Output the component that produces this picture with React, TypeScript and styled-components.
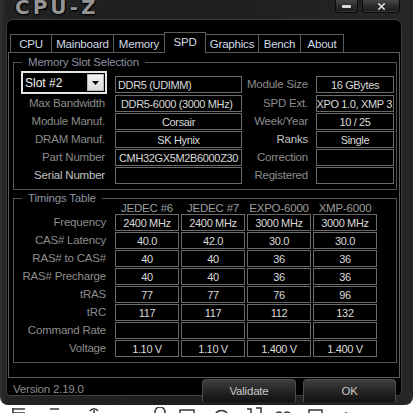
import React from "react";
import styled, { createGlobalStyle } from "styled-components";
import { X } from "lucide-react";

const GlobalStyle = createGlobalStyle`
  html, body {
    margin: 0;
    padding: 0;
    background: #ffffff;
  }
  body {
    font-family: "Liberation Sans", Arial, sans-serif;
    font-size: 11px;
  }
`;

const Screen = styled.div`
  width: 413px;
  height: 413px;
  overflow: hidden;
  background: #ffffff;
  display: flex;
  flex-direction: column;
`;

const Frame = styled.div`
  height: 405px;
  flex: 0 0 auto;
  box-sizing: border-box;
  padding: 0 11px 11px 6px;
  background: linear-gradient(90deg, #303030 0px, #222222 6px, #1e1e1e 50%, #262626 100%);
  border-radius: 0 0 8px 8px;
  display: flex;
  flex-direction: column;
`;

const TitleBar = styled.div`
  height: 19px;
  flex: 0 0 auto;
  display: flex;
  align-items: flex-start;
  justify-content: space-between;
`;

const Logo = styled.div`
  margin: -3px 0 0 9px;
  font-family: "DejaVu Sans", sans-serif;
  font-weight: bold;
  font-size: 20px;
  line-height: 20px;
  letter-spacing: 3px;
  color: #959595;
  text-shadow: 1px 1px 0 #000, -1px 0 0 #000, 0 1px 2px #000;
`;

const WinButtons = styled.div`
  display: flex;
  gap: 4px;
  margin-right: 2px;
`;

const WinButton = styled.div<{ $w: number }>`
  width: ${(p) => p.$w}px;
  height: 13px;
  box-sizing: border-box;
  border: 1px solid #0b0b0b;
  border-top: none;
  border-radius: 0 0 4px 4px;
  background: linear-gradient(180deg, #474747 0%, #2c2c2c 50%, #1a1a1a 100%);
  box-shadow: inset 0 -1px 0 rgba(255, 255, 255, 0.12);
  display: flex;
  align-items: center;
  justify-content: center;
  color: #dedede;
`;

const MinBar = styled.div`
  width: 9px;
  height: 3px;
  background: #d8d8d8;
  border-radius: 1px;
`;

const Panel = styled.div`
  flex: 1;
  background: #000;
  border: 1px solid #3e3e3e;
  border-radius: 7px 7px 4px 4px;
  padding: 12px 1px 0 1px;
  display: flex;
  flex-direction: column;
`;

const TabRow = styled.div`
  height: 20px;
  display: flex;
  align-items: flex-end;
  padding-left: 2px;
  position: relative;
  z-index: 1;
`;

const Tab = styled.div<{ $w: number; $active?: boolean }>`
  width: ${(p) => p.$w}px;
  height: ${(p) => (p.$active ? 21 : 18)}px;
  margin-bottom: ${(p) => (p.$active ? -1 : 0)}px;
  box-sizing: border-box;
  border: 1px solid #5c5c5c;
  border-bottom: none;
  background: #000;
  color: #d2dce6;
  font-size: 11.5px;
  letter-spacing: -0.2px;
  display: flex;
  align-items: center;
  justify-content: center;
  padding-bottom: ${(p) => (p.$active ? 3 : 0)}px;
  & + & {
    margin-left: -1px;
  }
`;

const TabPage = styled.div`
  height: 326px;
  flex: 0 0 auto;
  box-sizing: border-box;
  border: 1px solid #5c5c5c;
  padding: 9px 2px 0 4px;
  display: flex;
  flex-direction: column;
  gap: 8px;
`;

const Group = styled.div<{ $h: number }>`
  position: relative;
  height: ${(p) => p.$h}px;
  box-sizing: border-box;
  border: 1px solid #555;
`;

const Legend = styled.div`
  position: absolute;
  top: -7px;
  left: 8px;
  padding: 0 6px;
  background: #000;
  color: #8c90a0;
  line-height: 13px;
  font-size: 11.5px;
  letter-spacing: -0.2px;
`;

const SlotGrid = styled.div`
  display: grid;
  grid-template-columns: 101px 127px 74px 78px;
  grid-template-rows: 23px repeat(5, 17px);
  row-gap: 1px;
  padding-top: 8px;
`;

const Label = styled.div<{ $bright?: boolean; $pad?: number }>`
  color: ${(p) => (p.$bright ? "#c4c4c4" : "#8c8c8c")};
  font-size: 11.5px;
  letter-spacing: -0.2px;
  text-align: right;
  padding-right: ${(p) => p.$pad ?? 8}px;
  align-self: end;
  line-height: 17px;
  white-space: nowrap;
`;

const Value = styled.div<{ $left?: boolean; $pad?: number }>`
  height: 17px;
  box-sizing: border-box;
  border: 1px solid #6a6a6a;
  color: #dadada;
  font-size: 11px;
  letter-spacing: -0.35px;
  display: flex;
  align-items: center;
  justify-content: ${(p) => (p.$left ? "flex-start" : "center")};
  padding: 0 ${(p) => p.$pad ?? 2}px;
  overflow: hidden;
  white-space: nowrap;
  align-self: end;
`;

const SlotSelect = styled.div`
  justify-self: end;
  margin-right: 8px;
  width: 86px;
  height: 23px;
  box-sizing: border-box;
  border: 2px solid #e6e6e6;
  background: #000;
  display: flex;
  align-items: center;
  padding: 0 1px 0 2px;
  color: #f4f4f4;
  font-size: 12px;
`;

const SlotText = styled.div`
  flex: 1;
`;

const DropButton = styled.div`
  width: 17px;
  height: 17px;
  box-sizing: border-box;
  background: linear-gradient(180deg, #f2f2f2, #dadada);
  border: 1px solid #b8b8b8;
  display: flex;
  align-items: center;
  justify-content: center;
`;

const TimingGrid = styled.div`
  display: grid;
  grid-template-columns: 99px repeat(4, 64px);
  grid-template-rows: 14px repeat(8, 17px);
  column-gap: 2px;
  row-gap: 1px;
`;

const Head = styled.div`
  color: #9c9c9c;
  font-size: 11.5px;
  letter-spacing: -0.2px;
  text-align: center;
  line-height: 14px;
  padding-top: 2px;
`;

const Footer = styled.div`
  height: 16px;
  display: flex;
  align-items: flex-start;
  padding: 1px 4px 0 5px;
`;

const Version = styled.div`
  flex: 1;
  margin-top: 4px;
  color: #8c8c8c;
  font-size: 11.5px;
  letter-spacing: -0.2px;
  line-height: 13px;
`;

const ActionButton = styled.div<{ $w: number }>`
  width: ${(p) => p.$w}px;
  height: 24px;
  box-sizing: border-box;
  margin-left: 7px;
  border: 1px solid #4c4c4c;
  border-bottom-color: #222;
  border-radius: 4px 4px 3px 3px;
  background: linear-gradient(180deg, #3e3e3e 0%, #2a2a2a 40%, #111 100%);
  color: #c8c8c8;
  font-size: 11.5px;
  letter-spacing: -0.2px;
  display: flex;
  align-items: center;
  justify-content: center;
  position: relative;
`;

const Desk = styled.div`
  flex: 1;
  background: #fff;
`;

const tabs = [
  { name: "CPU", w: 42 },
  { name: "Mainboard", w: 63 },
  { name: "Memory", w: 52 },
  { name: "SPD", w: 42, active: true },
  { name: "Graphics", w: 54 },
  { name: "Bench", w: 43 },
  { name: "About", w: 44 },
];

type SlotRow = {
  label: string;
  value: string;
  left?: boolean;
  pad?: number;
  bright?: boolean;
  rlabel: string;
  rvalue: string;
  rbright?: boolean;
};

const slotRows: SlotRow[] = [
  { label: "Max Bandwidth", value: "DDR5-6000 (3000 MHz)", left: true, pad: 5, rlabel: "SPD Ext.", rvalue: "EXPO 1.0, XMP 3.0" },
  { label: "Module Manuf.", value: "Corsair", rlabel: "Week/Year", rvalue: "10 / 25" },
  { label: "DRAM Manuf.", value: "SK Hynix", rlabel: "Ranks", rvalue: "Single", rbright: true },
  { label: "Part Number", value: "CMH32GX5M2B6000Z30", left: true, pad: 3, rlabel: "Correction", rvalue: "" },
  { label: "Serial Number", value: "", bright: true, rlabel: "Registered", rvalue: "" },
];

const timingHeads = ["JEDEC #6", "JEDEC #7", "EXPO-6000", "XMP-6000"];

const timings: [string, string[]][] = [
  ["Frequency", ["2400 MHz", "2400 MHz", "3000 MHz", "3000 MHz"]],
  ["CAS# Latency", ["40.0", "42.0", "30.0", "30.0"]],
  ["RAS# to CAS#", ["40", "40", "36", "36"]],
  ["RAS# Precharge", ["40", "40", "36", "36"]],
  ["tRAS", ["77", "77", "76", "96"]],
  ["tRC", ["117", "117", "112", "132"]],
  ["Command Rate", ["", "", "", ""]],
  ["Voltage", ["1.10 V", "1.10 V", "1.400 V", "1.400 V"]],
];

const DeskIcons = () => (
  <svg width="413" height="8" viewBox="0 0 413 8">
    <g fill="none" stroke="#3a3a3a" strokeWidth="1.5">
      <path d="M12 2h13M12 6h13M13 1v7" />
      <path d="M50 2h9" />
      <path d="M90 4c2-3 6-3 8 0M94 3v5" />
      <path d="M155 8V5a5 5 0 0 1 10 0v3" />
      <rect x="180" y="3" width="14" height="8" />
      <path d="M215 8a7 7 0 0 1 13 0" />
      <path d="M247 2h4v6M256 1h5v7" />
      <path d="M276 8a3 3 0 0 1 6 0M284 8a3 3 0 0 1 6 0" />
      <rect x="309" y="3" width="13" height="8" />
      <path d="M346 5v3" />
    </g>
  </svg>
);

export default function App() {
  return (
    <Screen>
      <GlobalStyle />
      <Frame>
        <TitleBar>
          <Logo>CPU-Z</Logo>
          <WinButtons>
            <WinButton $w={23}>
              <MinBar />
            </WinButton>
            <WinButton $w={38}>
              <X size={11} strokeWidth={3.5} />
            </WinButton>
          </WinButtons>
        </TitleBar>
        <Panel>
          <TabRow>
            {tabs.map((t) => (
              <Tab key={t.name} $w={t.w} $active={t.active}>
                {t.name}
              </Tab>
            ))}
          </TabRow>
          <TabPage>
            <Group $h={128}>
              <Legend>Memory Slot Selection</Legend>
              <SlotGrid>
                <SlotSelect>
                  <SlotText>Slot #2</SlotText>
                  <DropButton>
                    <svg width="7" height="4" viewBox="0 0 7 4">
                      <path d="M0 0h7L3.5 4z" fill="#000" />
                    </svg>
                  </DropButton>
                </SlotSelect>
                <Value $left style={{ marginBottom: 1 }}>DDR5 (UDIMM)</Value>
                <Label style={{ marginBottom: 1 }}>Module Size</Label>
                <Value style={{ marginBottom: 1 }}>16 GBytes</Value>
                {slotRows.map((r) => (
                  <React.Fragment key={r.label}>
                    <Label $bright={r.bright} $pad={10}>{r.label}</Label>
                    <Value $left={r.left} $pad={r.pad}>{r.value}</Value>
                    <Label $bright={r.rbright}>{r.rlabel}</Label>
                    <Value>{r.rvalue}</Value>
                  </React.Fragment>
                ))}
              </SlotGrid>
            </Group>
            <Group $h={165}>
              <Legend>Timings Table</Legend>
              <TimingGrid>
                <div />
                {timingHeads.map((h) => (
                  <Head key={h}>{h}</Head>
                ))}
                {timings.map(([label, vals]) => (
                  <React.Fragment key={label}>
                    <Label $pad={7}>{label}</Label>
                    {vals.map((v, i) => (
                      <Value key={i}>{v}</Value>
                    ))}
                  </React.Fragment>
                ))}
              </TimingGrid>
            </Group>
          </TabPage>
          <Footer>
            <Version>Version 2.19.0</Version>
            <ActionButton $w={94}>Validate</ActionButton>
            <ActionButton $w={93}>OK</ActionButton>
          </Footer>
        </Panel>
      </Frame>
      <Desk>
        <DeskIcons />
      </Desk>
    </Screen>
  );
}
